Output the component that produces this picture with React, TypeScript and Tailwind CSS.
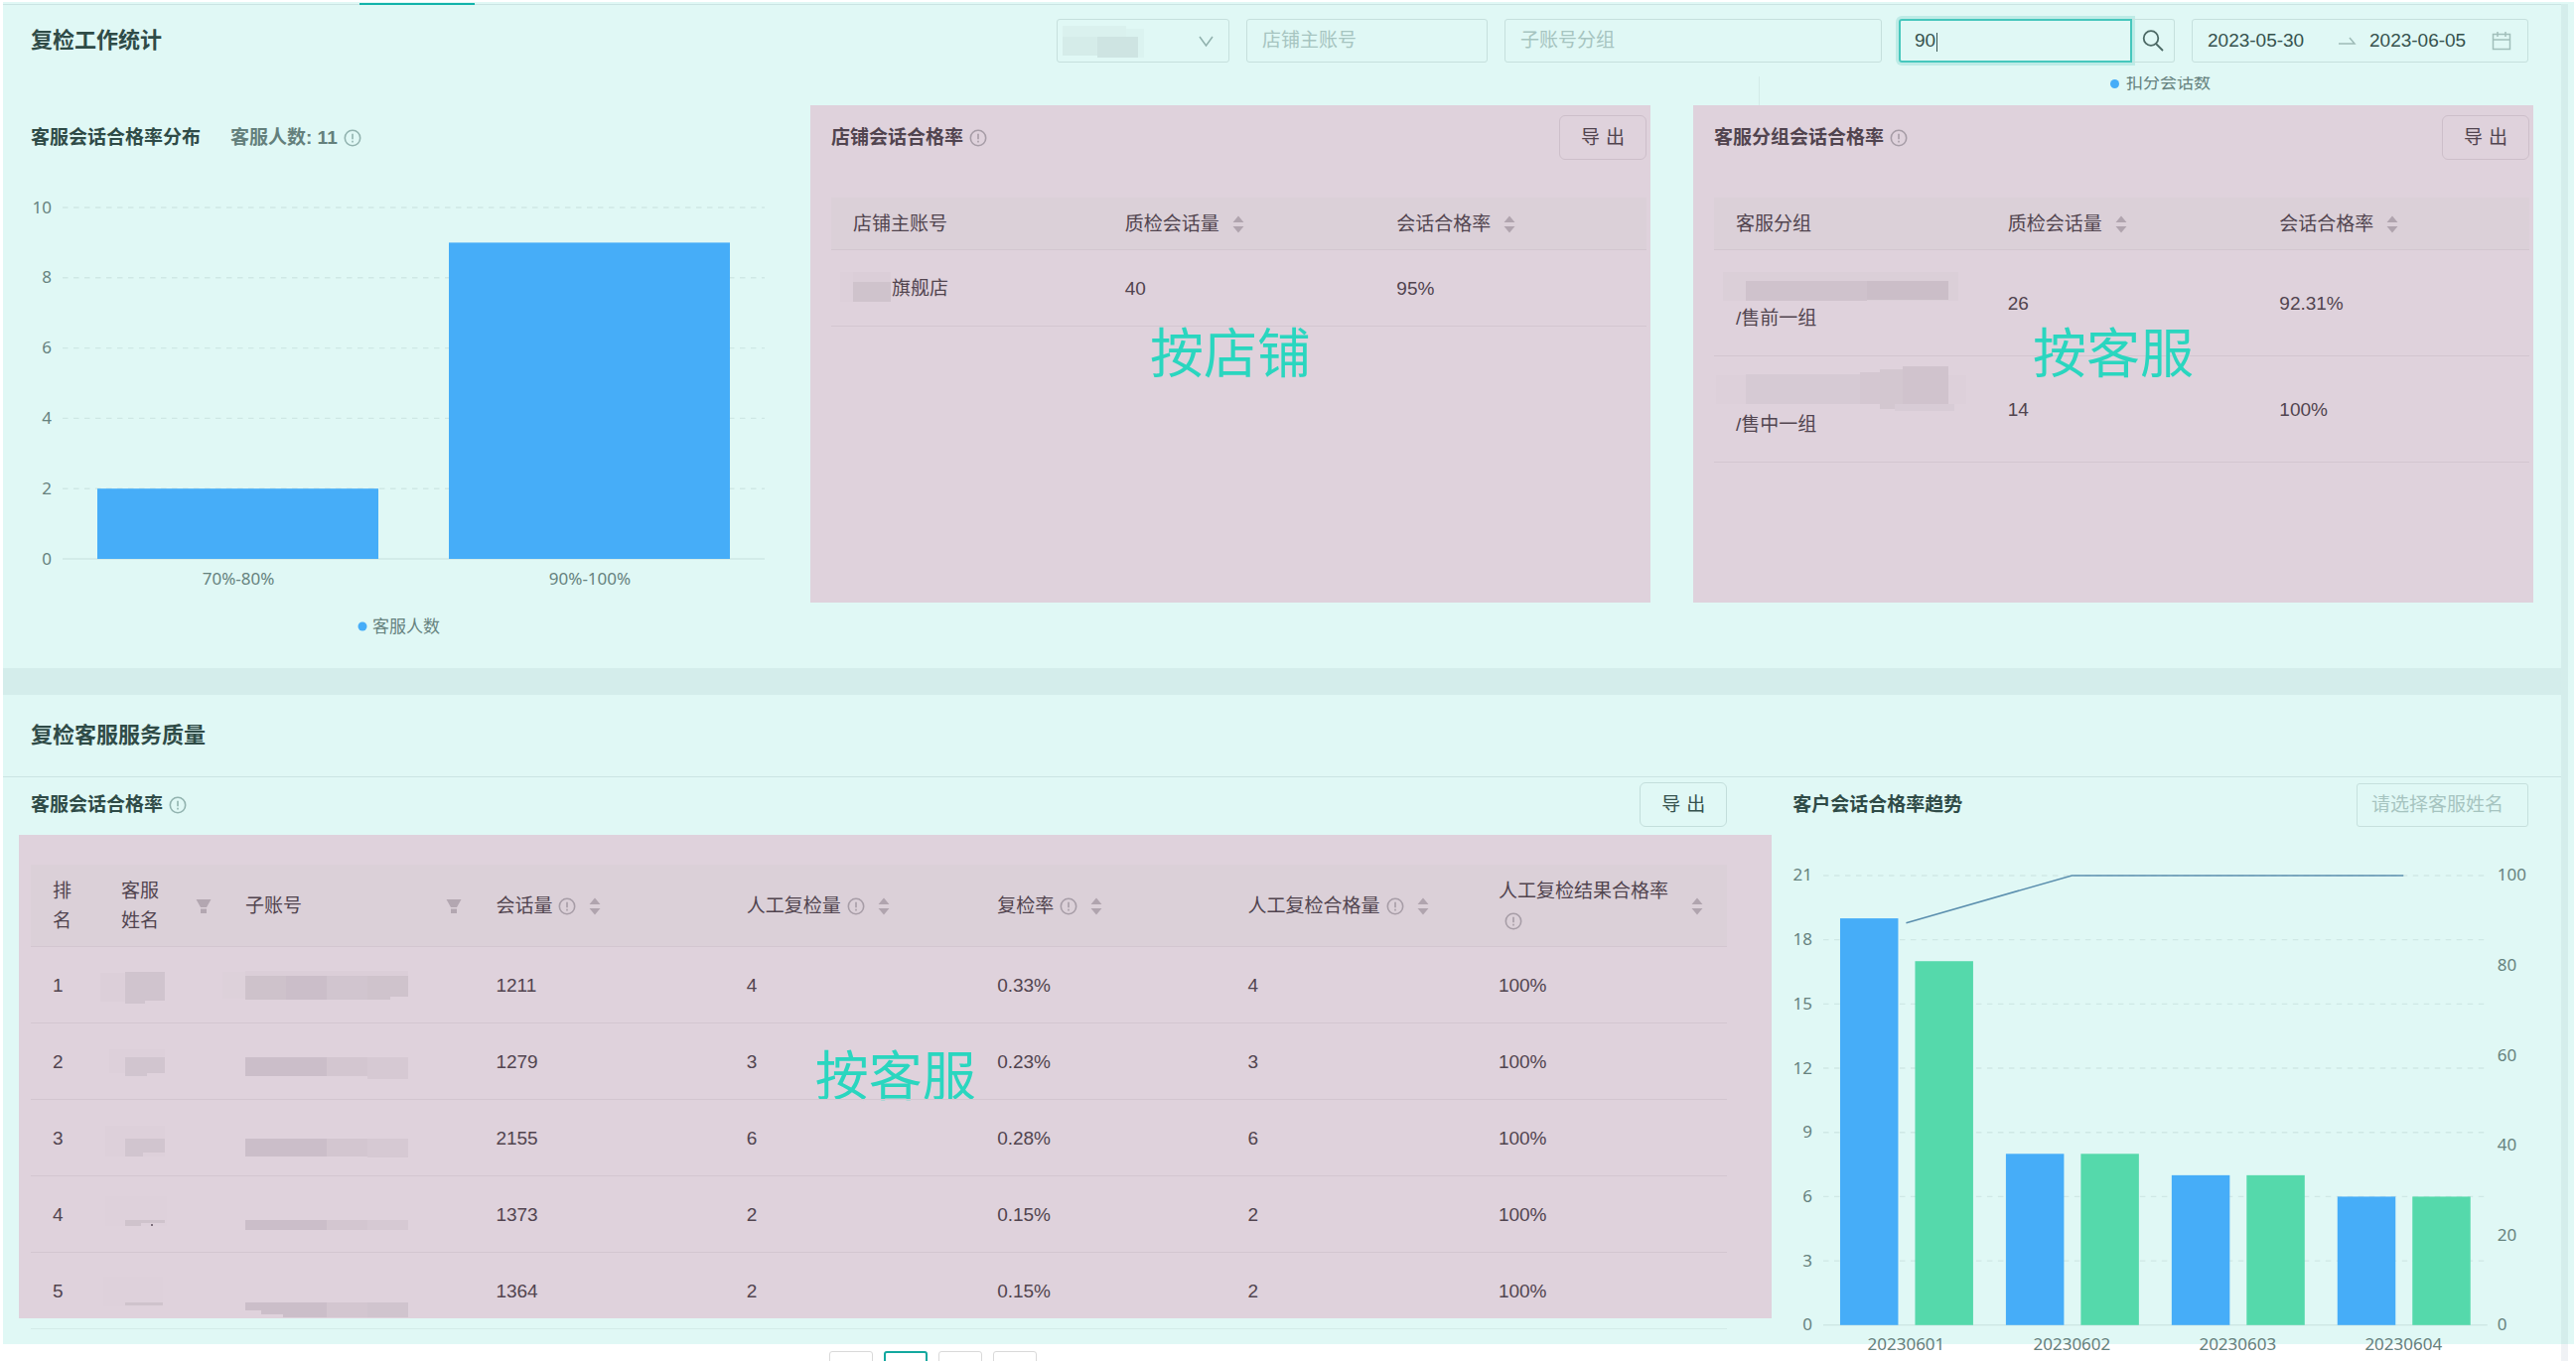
import type { ReactNode } from "react";

type Rect = [x: number, y: number, w: number, h: number, fill: string];

const binData = [
  { label: "70%-80%", value: 2 },
  { label: "90%-100%", value: 9 },
];

const trendData = [
  { date: "20230601", total: 19, passed: 17, rate: 89.47 },
  { date: "20230602", total: 8, passed: 8, rate: 100 },
  { date: "20230603", total: 7, passed: 7, rate: 100 },
  { date: "20230604", total: 6, passed: 6, rate: 100 },
];

const staffRows: {
  sessions: number;
  checked: number;
  ratio: string;
  passed: number;
  name: Rect[];
  account: Rect[];
}[] = [
  {
    sessions: 1211,
    checked: 4,
    ratio: "0.33%",
    passed: 4,
    name: [
      [-21, 2, 25, 29, "#dccfd9"],
      [4, 1, 40, 29, "#d0c4ce"],
      [4, 30, 20, 3, "#d0c4ce"],
    ],
    account: [
      [-23, 1, 23, 27, "#ddd1da"],
      [0, 0, 164, 5, "#dbced8"],
      [0, 5, 41, 24, "#cec2cb"],
      [41, 5, 41, 24, "#cbbec9"],
      [82, 5, 41, 24, "#d1c5cf"],
      [123, 5, 41, 21, "#cfc3cc"],
      [123, 26, 23, 3, "#cfc3cc"],
    ],
  },
  {
    sessions: 1279,
    checked: 3,
    ratio: "0.23%",
    passed: 3,
    name: [
      [-12, 2, 56, 24, "#ddd0da"],
      [4, 10, 40, 16, "#d1c5cf"],
      [4, 26, 22, 3, "#d1c5cf"],
    ],
    account: [
      [0, 10, 82, 19, "#cbbec9"],
      [82, 10, 41, 19, "#d3c6d0"],
      [123, 10, 41, 22, "#d6c9d3"],
    ],
  },
  {
    sessions: 2155,
    checked: 6,
    ratio: "0.28%",
    passed: 6,
    name: [
      [-16, 2, 60, 31, "#ddd0da"],
      [4, 15, 40, 14, "#d1c5cf"],
      [4, 29, 18, 4, "#d1c5cf"],
    ],
    account: [
      [0, 15, 82, 18, "#cbbec9"],
      [82, 15, 41, 18, "#d3c6d0"],
      [123, 15, 41, 19, "#d6c9d3"],
    ],
  },
  {
    sessions: 1373,
    checked: 2,
    ratio: "0.15%",
    passed: 2,
    name: [
      [-16, -4, 62, 30, "#ded1db"],
      [4, 20, 40, 3, "#cfc3cc"],
      [4, 23, 16, 3, "#cfc3cc"],
      [30, 24, 2, 2, "#7b6f7b"],
    ],
    account: [
      [0, 20, 82, 10, "#cbbec9"],
      [82, 20, 41, 10, "#d3c6d0"],
      [123, 20, 41, 10, "#d6c9d3"],
    ],
  },
  {
    sessions: 1364,
    checked: 2,
    ratio: "0.15%",
    passed: 2,
    name: [
      [-18, 0, 60, 30, "#ded1db"],
      [4, 26, 38, 3, "#cfc3cc"],
    ],
    account: [
      [0, 26, 82, 8, "#cbbec9"],
      [16, 34, 66, 4, "#cbbec9"],
      [38, 38, 44, 3, "#cbbec9"],
      [82, 26, 41, 15, "#d3c6d0"],
      [123, 26, 41, 15, "#d0c4ce"],
    ],
  },
];

const groupRows: { group: string; count: number; rate: string; mask: Rect[] }[] = [
  {
    group: "/售前一组",
    count: 26,
    rate: "92.31%",
    mask: [
      [-13, -2, 237, 29, "#dbcfd8"],
      [10, 7, 122, 20, "#cfc2cc"],
      [132, 7, 82, 19, "#cbbec8"],
    ],
  },
  {
    group: "/售中一组",
    count: 14,
    rate: "100%",
    mask: [
      [-20, -5, 252, 29, "#ddd0da"],
      [10, -6, 122, 30, "#d6cad4"],
      [125, -8, 20, 32, "#d4c7d1"],
      [145, -11, 28, 40, "#d3c7d0"],
      [168, -14, 46, 38, "#d0c3cd"],
      [160, 24, 60, 7, "#d8ccd6"],
    ],
  },
];

function Mask({ rects, className }: { rects: Rect[]; className: string }) {
  return (
    <svg aria-hidden="true" className={`h-[30px] overflow-visible ${className}`} shapeRendering="crispEdges">
      {rects.map(([x, y, w, h, fill], i) => (
        <rect key={i} x={x} y={y} width={w} height={h} fill={fill} />
      ))}
    </svg>
  );
}

function InfoIcon({ className = "text-[#a79da7]" }: { className?: string }) {
  return (
    <svg viewBox="0 0 18 18" className={`ml-[6px] inline-block h-[18px] w-[18px] align-[-3px] ${className}`} fill="none" stroke="currentColor">
      <circle cx="9" cy="9" r="7.7" strokeWidth="1.6" />
      <path d="M9 4.8v5.4M9 11.8v1.6" strokeWidth="1.6" />
    </svg>
  );
}

function SortIcon() {
  return (
    <svg viewBox="0 0 12 18" className="ml-[13px] h-[18px] w-3 shrink-0" fill="#b0a4ae">
      <path d="M6 0.5l5.5 6.5H0.5zM6 17.5l5.5-6.5H0.5z" />
    </svg>
  );
}

function FilterIcon() {
  return (
    <svg viewBox="0 0 16 16" className="h-4 w-4 shrink-0" fill="#b3a7b1">
      <path d="M0.5 1h15l-4.5 8H5zM5 10.5h6V15H5z" />
    </svg>
  );
}

function ExportButton({ pink }: { pink?: boolean }) {
  return (
    <button
      type="button"
      className={`flex h-[45px] w-[88px] items-center justify-center gap-[6px] rounded-md border ${
        pink ? "border-[#cdbfca] text-[#51444f]" : "border-[#c3dedb] text-[#36524e]"
      }`}
    >
      <span>导</span>
      <span>出</span>
    </button>
  );
}

function HeadCell({ children, info, sort }: { children: ReactNode; info?: boolean; sort?: boolean }) {
  return (
    <th scope="col" className="pt-3 pb-[10px] pl-[22px] text-left font-normal">
      <div className="flex items-center">
        <span>
          {children}
          {info && <InfoIcon />}
        </span>
        {sort && <SortIcon />}
      </div>
    </th>
  );
}

function Annotation({ children }: { children: string }) {
  return (
    <div className="pointer-events-none absolute inset-0 flex items-center justify-center text-[54px] leading-[54px] text-[#2ad6bf]">
      {children}
    </div>
  );
}

function DistributionChart() {
  const base = 402;
  const step = 70.8;
  const left = 32;
  const band = 354;
  return (
    <svg viewBox="0 0 742 489" className="block w-full font-['Noto_Sans','Noto_Sans_CJK_SC',sans-serif] text-[17px]" role="img" aria-label="客服会话合格率分布">
      {[0, 2, 4, 6, 8, 10].map((tick) => {
        const y = base - (tick / 2) * step;
        return (
          <g key={tick}>
            <line x1={left} x2={739} y1={y} y2={y} stroke="#cfe8e5" strokeWidth="1.4" strokeDasharray={tick ? "5.5 5.5" : undefined} />
            <text x={21} y={y - 1} textAnchor="end" dominantBaseline="central" fill="#66827e">
              {tick}
            </text>
          </g>
        );
      })}
      {binData.map((bin, i) => (
        <g key={bin.label}>
          <rect x={left + band * i + 35} y={base - (bin.value / 2) * step} width={283} height={(bin.value / 2) * step} fill="#46adf8" />
          <text x={left + band * (i + 0.5)} y={421} textAnchor="middle" dominantBaseline="central" fill="#66827e">
            {bin.label}
          </text>
        </g>
      ))}
      <circle cx="334" cy="470" r="4.5" fill="#46adf8" />
      <text x="344" y="469" dominantBaseline="central" fill="#66827e">
        客服人数
      </text>
    </svg>
  );
}

function TrendChart() {
  const base = 502;
  const height = 453;
  const left = 31;
  const band = 167;
  const yOf = (value: number, max: number) => base - (value / max) * height;
  const points = trendData.map((d, i) => `${left + band * (i + 0.5)},${yOf(d.rate, 100)}`).join(" ");
  return (
    <svg viewBox="0 0 741 540" className="block w-full font-['Noto_Sans',sans-serif] text-[17px]" role="img" aria-label="客户会话合格率趋势">
      {[0, 3, 6, 9, 12, 15, 18, 21].map((tick) => (
        <g key={tick}>
          <line x1={left} x2={700} y1={yOf(tick, 21)} y2={yOf(tick, 21)} stroke="#cfe8e5" strokeWidth="1.4" strokeDasharray={tick ? "5.5 5.5" : undefined} />
          <text x={20} y={yOf(tick, 21) - 1} textAnchor="end" dominantBaseline="central" fill="#66827e">
            {tick}
          </text>
        </g>
      ))}
      {[0, 20, 40, 60, 80, 100].map((tick) => (
        <text key={tick} x={710} y={yOf(tick, 100) - 1} dominantBaseline="central" fill="#66827e">
          {tick}
        </text>
      ))}
      {trendData.map((d, i) => {
        const x = left + band * i + 17;
        return (
          <g key={d.date}>
            <rect x={x} y={yOf(d.total, 21)} width={58.5} height={base - yOf(d.total, 21)} fill="#46adf8" />
            <rect x={x + 75.5} y={yOf(d.passed, 21)} width={58.5} height={base - yOf(d.passed, 21)} fill="#55d9ab" />
            <text x={left + band * (i + 0.5)} y={521} textAnchor="middle" dominantBaseline="central" fill="#66807d">
              {d.date}
            </text>
          </g>
        );
      })}
      <polyline points={points} fill="none" stroke="#5b8fae" strokeWidth="1.6" />
    </svg>
  );
}

function Filters() {
  const box = "h-11 rounded-[3px] border border-[#c6e0dd] bg-transparent px-[15px] placeholder:text-[#a6c4c0] outline-none";
  return (
    <form className="flex gap-[17px] text-[#36524e]">
      <div className="relative">
        <select aria-label="平台" className="h-11 w-[174px] appearance-none rounded-[3px] border border-[#c6e0dd] bg-transparent">
          <option></option>
        </select>
        <svg className="pointer-events-none absolute inset-0 h-full w-full" viewBox="0 0 174 44" fill="none" shapeRendering="crispEdges">
          <path d="M6 7h64v30H6z" fill="#daf1ee" />
          <path d="M6 18h35v19H6z" fill="#d5ece9" />
          <path d="M70 10h18v29H70z" fill="#dbf3f0" />
          <path d="M41 18h41v21H41z" fill="#cee4e2" />
          <path d="M144 18l6.5 9 6.5-9" stroke="#8fb0ac" strokeWidth="1.5" shapeRendering="auto" />
        </svg>
      </div>
      <input type="text" aria-label="店铺主账号" placeholder="店铺主账号" className={`${box} w-[243px]`} />
      <input type="text" aria-label="子账号分组" placeholder="子账号分组" className={`${box} w-[380px]`} />
      <div className="relative flex">
        <input
          type="text"
          aria-label="搜索"
          defaultValue="90"
          className="h-11 w-[235px] rounded-l-[3px] border-2 border-[#46c7bd] bg-transparent px-[14px] shadow-[0_0_0_3px_#bdebe6] outline-none"
        />
        <span aria-hidden="true" className="absolute top-[14px] left-[38px] h-[19px] w-px bg-[#36524e]" />
        <button type="button" aria-label="查询" className="flex h-11 w-[43px] items-center justify-center rounded-r-[3px] border border-l-0 border-[#c6e0dd]">
          <svg viewBox="0 0 22 22" className="h-[22px] w-[22px]" fill="none" stroke="#4c6965" strokeWidth="1.8">
            <circle cx="9" cy="8.5" r="7.3" />
            <path d="M14 14l7 7" />
          </svg>
        </button>
      </div>
      <div className="flex h-11 w-[339px] items-center rounded-[3px] border border-[#c6e0dd] pr-4 pl-[15px]">
        <input type="text" aria-label="开始日期" defaultValue="2023-05-30" className="w-[132px] bg-transparent outline-none" />
        <svg viewBox="0 0 18 10" className="mr-[13px] h-[10px] w-[18px]" fill="none" stroke="#9dbbb7" strokeWidth="1.5">
          <path d="M0 8h16l-5-6" />
        </svg>
        <input type="text" aria-label="结束日期" defaultValue="2023-06-05" className="w-0 flex-1 bg-transparent outline-none" />
        <svg viewBox="0 0 20 20" className="h-5 w-5" fill="none" stroke="#a1bfbb" strokeWidth="1.5">
          <path d="M1.5 3.5h17v15h-17zM1.5 9h17M6 1v5M14 1v5" />
        </svg>
      </div>
    </form>
  );
}

function StatCard({ title, note, children }: { title: string; note: string; children: ReactNode }) {
  return (
    <section className="relative h-[501px] bg-[#dfd2dc] pt-[10px] pr-1 pl-[21px] text-[#51444f]">
      <div className="flex items-center justify-between">
        <h3 className="font-bold">
          {title}
          <InfoIcon />
        </h3>
        <ExportButton pink />
      </div>
      <table className="mt-[38px] w-full table-fixed">{children}</table>
      <Annotation>{note}</Annotation>
    </section>
  );
}

export default function App() {
  const cell = "pt-6 pb-[22px] pl-[22px]";
  return (
    <div className="relative flex h-screen overflow-hidden bg-white pt-1 pr-2 pl-[3px] font-['Liberation_Sans','Noto_Sans_CJK_SC',sans-serif] text-[19px] leading-[30px]">
      <div className="absolute top-[2px] right-[2px] bottom-[17px] left-[3px] bg-[#e0f8f5]" />

      <main className="relative min-w-0 flex-1">
        <div className="absolute -top-px left-[359px] h-[2px] w-[116px] bg-[#12b3aa]" />

        <section className="border-t border-[#cbe4e3]">
          <div className="flex items-center justify-between pt-[14px] pr-[33px] pl-7">
            <h2 className="text-[22px] font-bold text-[#2f4b47]">复检工作统计</h2>
            <Filters />
          </div>

          {/* tail of the chart scrolled under the filters */}
          <div className="flex h-[43px] justify-end pt-[14px] pr-[353px]">
            <div className="mr-[353px] w-px bg-[#d3ebe8]" />
            <div className="flex h-[14px] items-center gap-[7px] overflow-hidden text-[17px] text-[#66827e]">
              <span className="h-[9px] w-[9px] rounded-full bg-[#46adf8]" />
              扣分会话数
            </div>
          </div>

          <div className="grid grid-cols-[742fr_846fr_846fr] gap-x-[43px] px-7 pb-[66px]">
            <div className="h-[501px] pt-[10px]">
              <div className="flex h-[45px] items-center font-bold">
                <h3 className="mr-[30px] text-[#2f4b47]">客服会话合格率分布</h3>
                <span className="text-[#64807c]">
                  客服人数: 11
                  <InfoIcon className="text-[#92b3af]" />
                </span>
              </div>
              <DistributionChart />
            </div>

            <StatCard title="店铺会话合格率" note="按店铺">
              <thead className="bg-[#dbd0d8]">
                <tr className="border-b border-[#d3c6d0]">
                  <HeadCell>店铺主账号</HeadCell>
                  <HeadCell sort>质检会话量</HeadCell>
                  <HeadCell sort>会话合格率</HeadCell>
                </tr>
              </thead>
              <tbody>
                <tr className="border-b border-[#d3c6d0]">
                  <td className={cell}>
                    <div className="flex items-center">
                      <Mask
                        className="w-[39px]"
                        rects={[
                          [-13, -2, 13, 30, "#ddd0da"],
                          [0, -2, 38, 10, "#dbced8"],
                          [0, 8, 38, 20, "#cfc3cc"],
                        ]}
                      />
                      旗舰店
                    </div>
                  </td>
                  <td className={cell}>40</td>
                  <td className={cell}>95%</td>
                </tr>
              </tbody>
            </StatCard>

            <StatCard title="客服分组会话合格率" note="按客服">
              <thead className="bg-[#dbd0d8]">
                <tr className="border-b border-[#d3c6d0]">
                  <HeadCell>客服分组</HeadCell>
                  <HeadCell sort>质检会话量</HeadCell>
                  <HeadCell sort>会话合格率</HeadCell>
                </tr>
              </thead>
              <tbody>
                {groupRows.map((row) => (
                  <tr key={row.group} className="border-b border-[#d3c6d0]">
                    <td className={cell}>
                      <Mask className="block w-[215px]" rects={row.mask} />
                      {row.group}
                    </td>
                    <td className={cell}>{row.count}</td>
                    <td className={cell}>{row.rate}</td>
                  </tr>
                ))}
              </tbody>
            </StatCard>
          </div>
        </section>

        <div className="h-[27px] bg-[#d4edeb]" />

        <section>
          <div className="flex h-[83px] items-center border-b border-[#cbe4e3] pl-7">
            <h2 className="text-[22px] font-bold text-[#2f4b47]">复检客服服务质量</h2>
          </div>

          <div className="grid grid-cols-[1709fr_741fr] gap-x-[66px] pt-[5px] pr-[33px] pl-7">
            <div>
              <div className="flex items-center justify-between">
                <h3 className="font-bold text-[#2f4b47]">
                  客服会话合格率
                  <InfoIcon className="text-[#92b3af]" />
                </h3>
                <ExportButton />
              </div>

              <div className="relative mt-2 pt-[30px] text-[#51444f]">
                <div className="absolute top-0 -right-[45px] bottom-[11px] -left-3 bg-[#dfd2dc]">
                  <Annotation>按客服</Annotation>
                </div>
                <table className="relative w-full table-fixed">
                  <colgroup>
                    <col className="w-[69px]" />
                    <col className="w-[125px]" />
                    <col span={6} />
                  </colgroup>
                  <thead className="bg-[#dbd0d8]">
                    <tr className="border-b border-[#d3c6d0]">
                      <th scope="col" className="px-[22px] pt-3 pb-[10px] text-left font-normal">
                        排名
                      </th>
                      <th scope="col" className="pt-3 pr-3 pb-[10px] pl-[22px] text-left font-normal">
                        <div className="flex items-center justify-between">
                          <span>
                            客服
                            <br />
                            姓名
                          </span>
                          <FilterIcon />
                        </div>
                      </th>
                      <th scope="col" className="pt-3 pr-3 pb-[10px] pl-[22px] text-left font-normal">
                        <div className="flex items-center justify-between">
                          子账号
                          <FilterIcon />
                        </div>
                      </th>
                      <HeadCell info sort>会话量</HeadCell>
                      <HeadCell info sort>人工复检量</HeadCell>
                      <HeadCell info sort>复检率</HeadCell>
                      <HeadCell info sort>人工复检合格量</HeadCell>
                      <th scope="col" className="pt-3 pr-6 pb-[10px] pl-[22px] text-left font-normal">
                        <div className="flex items-center justify-between">
                          <span>
                            人工复检结果合格率
                            <br />
                            <InfoIcon />
                          </span>
                          <SortIcon />
                        </div>
                      </th>
                    </tr>
                  </thead>
                  <tbody>
                    {staffRows.map((row, i) => (
                      <tr key={row.sessions} className="border-b border-[#d3c6d0] last:border-[#d3ebe8]">
                        <td className={cell}>{i + 1}</td>
                        <td className={cell}>
                          <Mask className="block w-[44px]" rects={row.name} />
                        </td>
                        <td className={cell}>
                          <Mask className="block w-[164px]" rects={row.account} />
                        </td>
                        <td className={cell}>{row.sessions}</td>
                        <td className={cell}>{row.checked}</td>
                        <td className={cell}>{row.ratio}</td>
                        <td className={cell}>{row.passed}</td>
                        <td className={cell}>100%</td>
                      </tr>
                    ))}
                  </tbody>
                </table>
              </div>

              <nav aria-label="分页" className="mt-[22px] flex gap-[11px] pl-[804px] text-[#595959]">
                <button type="button" aria-label="上一页" className="h-11 w-11 rounded-[3px] border border-[#d9d9d9]" />
                <button type="button" aria-label="第 1 页" aria-current="page" className="h-11 w-11 rounded-[3px] border-2 border-[#12a89f]" />
                <button type="button" aria-label="第 2 页" className="h-11 w-11 rounded-[3px] border border-[#d9d9d9]" />
                <button type="button" aria-label="下一页" className="h-11 w-11 rounded-[3px] border border-[#d9d9d9]" />
              </nav>
            </div>

            <div>
              <div className="flex h-[45px] items-center justify-between">
                <h3 className="font-bold text-[#2f4b47]">客户会话合格率趋势</h3>
                <input
                  type="text"
                  aria-label="客服姓名"
                  placeholder="请选择客服姓名"
                  className="h-11 w-[173px] rounded-[3px] border border-[#c6e0dd] bg-transparent px-[14px] placeholder:text-[#a6c4c0] outline-none"
                />
              </div>
              <TrendChart />
            </div>
          </div>
        </section>
      </main>

      {/* scrollbar track */}
      <div className="relative flex w-[7px] flex-col">
        <div className="flex-1 bg-[#d4edeb]" />
        <div className="h-[17px] bg-[#f0f2f5]" />
      </div>
    </div>
  );
}
